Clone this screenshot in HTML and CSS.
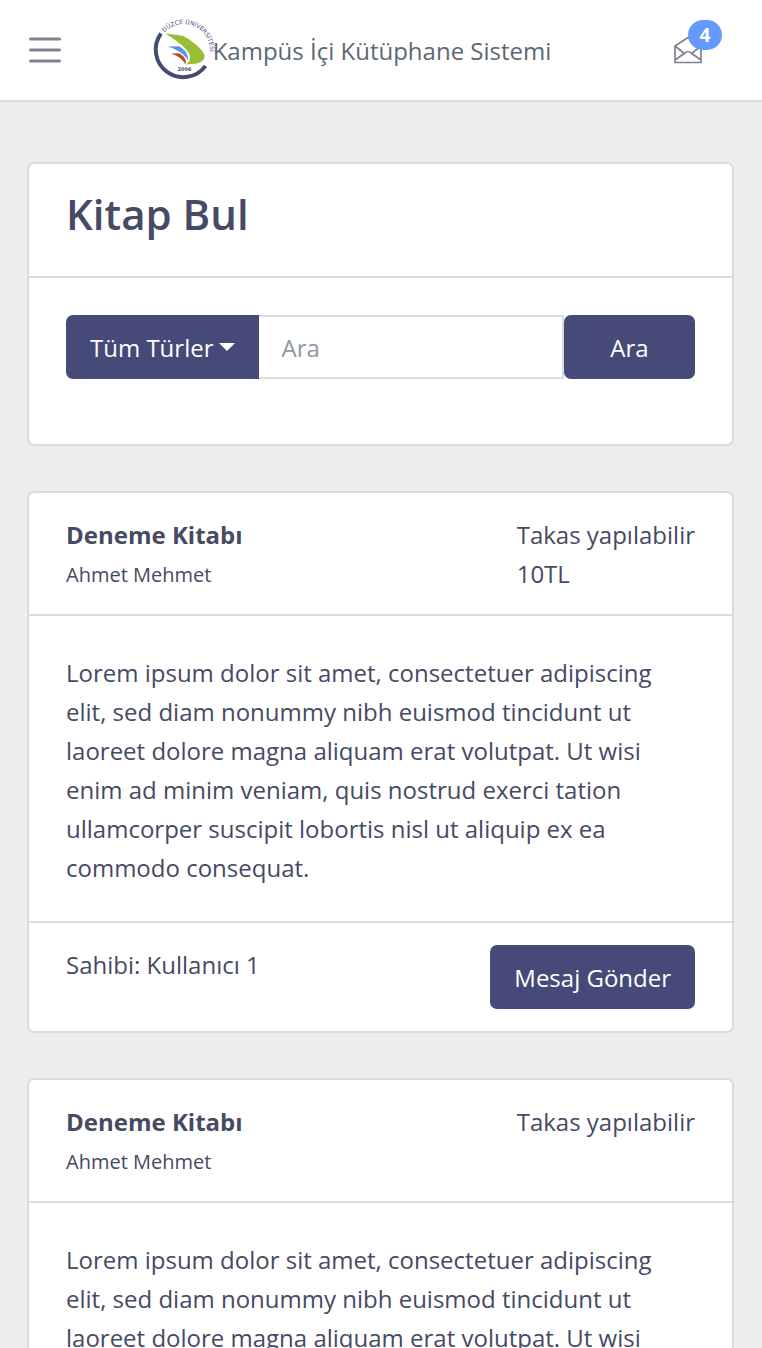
FILE: index.html
```html
<!DOCTYPE html>
<html lang="tr">
<head>
<meta charset="utf-8">
<meta name="viewport" content="width=device-width, initial-scale=1">
<title>Kampüs İçi Kütüphane Sistemi</title>
<link rel="stylesheet" href="styles.css">
</head>
<body>
<header class="topbar">
  <button class="menu-button" type="button" aria-label="Menü">
    <svg width="32" height="26" viewBox="0 0 32 26" fill="none" stroke="#80808f" stroke-width="3" stroke-linecap="round"><path d="M1.5 2h29M1.5 13h29M1.5 24h29"/></svg>
  </button>
  <a class="brand" href="#">
    <svg class="logo" width="60" height="62" viewBox="0 0 60 62" aria-hidden="true">
      <defs><path id="ring" d="M11.4 13.4A25.500 25.500 0 1 1 50 49"/></defs>
      <path d="M8 14.5A27.4 27.4 0 0 0 52.5 46.8" fill="none" stroke="#464a78" stroke-width="4"/>
      <text class="logo-ring"><textPath href="#ring">DÜZCE ÜNİVERSİTESİ</textPath></text>
      <path d="M12.5 14.5L29.7 16.8C38 21 47 28 50.5 34C53.5 39 50 42.5 44 44.5L33 45.5C37.5 42 38 38 36 34.5C32 27 22 21 12.5 14.5Z" fill="#9abe33"/>
      <path d="M14.5 27.5L26 27.2C32 30 36 36 34.8 41C31 34.5 23 30 14.5 27.5Z" fill="#5b96e0"/>
      <path d="M18 34.6L26 34.3C31 37 34 41 32.5 45.5C29.5 40 24 36.5 18 34.6Z" fill="#bd4529"/>
      <text class="logo-year" x="31.5" y="52" text-anchor="middle">2006</text>
    </svg>
    <span>Kampüs İçi Kütüphane Sistemi</span>
  </a>
  <a class="messages" href="#" aria-label="Mesajlar">
    <svg width="28" height="28" viewBox="0 0 28 28" fill="none" stroke="#80808f" stroke-width="1.7"><path d="M1 10L14 1.5L27 10V26.5H1ZM1 10L11 18M27 10L17 18M1 24L11 17Q14 14 17 17L27 24"/></svg>
    <span class="badge">4</span>
  </a>
</header>

<main class="content">
  <section class="card">
    <div class="card-header"><h1 class="title">Kitap Bul</h1></div>
    <form class="search">
      <button class="button type-button" type="button" aria-haspopup="true">Tüm Türler<span class="caret"></span></button>
      <input class="search-input" type="text" placeholder="Ara" aria-label="Ara">
      <button class="button submit-button" type="button">Ara</button>
    </form>
  </section>

  <article class="card">
    <div class="card-header book-header">
      <div><strong class="book-title">Deneme Kitabı</strong><div class="author">Ahmet Mehmet</div></div>
      <div><div>Takas yapılabilir</div><div>10TL</div></div>
    </div>
    <p class="description">Lorem ipsum dolor sit amet, consectetuer adipiscing elit, sed diam nonummy nibh euismod tincidunt ut laoreet dolore magna aliquam erat volutpat. Ut wisi enim ad minim veniam, quis nostrud exerci tation ullamcorper suscipit lobortis nisl ut aliquip ex ea commodo consequat.</p>
    <div class="card-footer"><span>Sahibi: Kullanıcı 1</span><button class="button" type="button">Mesaj Gönder</button></div>
  </article>

  <article class="card">
    <div class="card-header book-header">
      <div><strong class="book-title">Deneme Kitabı</strong><div class="author">Ahmet Mehmet</div></div>
      <div>Takas yapılabilir</div>
    </div>
    <p class="description">Lorem ipsum dolor sit amet, consectetuer adipiscing elit, sed diam nonummy nibh euismod tincidunt ut laoreet dolore magna aliquam erat volutpat. Ut wisi enim ad minim veniam, quis nostrud exerci tation ullamcorper suscipit lobortis nisl ut aliquip ex ea commodo consequat.</p>
    <div class="card-footer"><span>Sahibi: Kullanıcı 1</span><button class="button" type="button">Mesaj Gönder</button></div>
  </article>
</main>
</body>
</html>
```

FILE: styles.css
```css
* { box-sizing: border-box; }

html { scrollbar-width: none; }

body {
  margin: 0;
  background: #ebedef;
  color: #464a64;
  font: 24px/39px "Open Sans", "Noto Sans", sans-serif;
}

.topbar {
  display: grid;
  grid-template-columns: 90px 1fr 148px;
  align-items: center;
  height: 102px;
  background: #fff;
  border-bottom: 2px solid #d8dbe0;
}

.menu-button {
  display: flex;
  justify-self: start;
  margin-left: 29px;
  padding: 0;
  border: 0;
  background: none;
}

.brand {
  display: flex;
  align-items: center;
  justify-content: center;
  color: #5c6873;
  text-decoration: none;
  white-space: nowrap;
}

.logo { overflow: visible; }

.logo-ring,
.logo-year {
  fill: #464a78;
  font-family: "DejaVu Sans", sans-serif;
}

.logo-ring { font-size: 6px; }

.logo-year {
  font-size: 5px;
  font-weight: 700;
}

.messages {
  position: relative;
  display: flex;
  justify-self: start;
  margin-left: 60px;
  text-decoration: none;
}

.badge {
  position: absolute;
  left: 14px;
  bottom: 14px;
  width: 34px;
  border-radius: 15px;
  background: #6699fe;
  color: #fff;
  font-size: 19px;
  font-weight: 700;
  line-height: 30px;
  text-align: center;
}

.content {
  display: flex;
  flex-direction: column;
  gap: 45px;
  padding: 60px 28px 45px 27px;
}

.card {
  background: #fff;
  border: 2px solid #d8dbe0;
  border-radius: 7px;
}

.card-header {
  padding: 22px 37px 19px;
  border-bottom: 2px solid #d8dbe0;
}

.title {
  margin: 0 0 15px;
  font-size: 42px;
  font-weight: 600;
  line-height: 56px;
}

.search {
  display: flex;
  padding: 37px 37px 65px;
}

.button {
  height: 64px;
  padding: 0 24px;
  border: 0;
  border-radius: 7px;
  background: #464a78;
  color: #fff;
  font: inherit;
}

.type-button {
  display: flex;
  align-items: center;
  gap: 6px;
  border-radius: 7px 0 0 7px;
}

.caret {
  border: 8px solid transparent;
  border-top-color: #fff;
  border-bottom: 0;
}

.search-input {
  flex: 1;
  min-width: 0;
  padding: 0 22px;
  border: 2px solid #d8dbe0;
  border-left: 0;
  color: inherit;
  font: inherit;
}

.search-input::placeholder { color: #9196a3; opacity: 1; }

.submit-button { width: 131px; }

.book-header {
  display: flex;
  justify-content: space-between;
}

.book-title { display: block; }

.author {
  font-size: 20px;
  line-height: 41px;
}

.description {
  margin: 0;
  padding: 37px 37px 34px;
}

.card-footer {
  display: flex;
  justify-content: space-between;
  padding: 22px 37px;
  border-top: 2px solid #d8dbe0;
}
```
